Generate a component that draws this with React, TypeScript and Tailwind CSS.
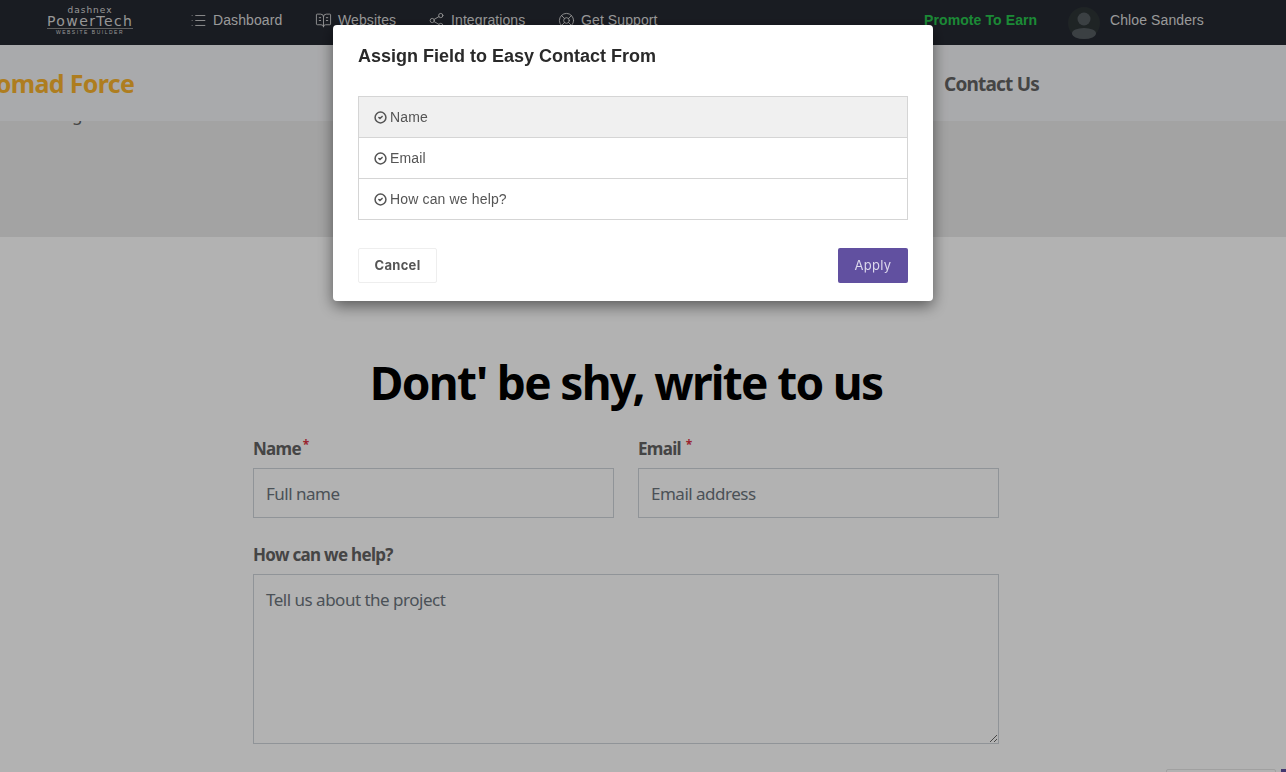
import { BookOpenText, CircleCheck, LifeBuoy, List, Share2 } from 'lucide-react';

const navItems = [
    { label: 'Dashboard', Icon: List, width: 'w-[125px]' },
    { label: 'Websites', Icon: BookOpenText, width: 'w-[113px]' },
    { label: 'Integrations', Icon: Share2, width: 'w-[130px]' },
    { label: 'Get Support', Icon: LifeBuoy, width: 'w-[120px]' },
];

const fields = ['Name', 'Email', 'How can we help?'];

function Logo() {
    return (
        <div className="ml-[47px] flex w-[86px] flex-col items-center text-[#d8d8d8] font-['DejaVu_Sans',sans-serif]">
            <span className="text-[9px] leading-[9px] tracking-[1px]">dashnex</span>
            <span className="w-full border-b border-[#8a8a8a] text-center text-[14px] leading-[13px] tracking-[1.4px]">PowerTech</span>
            <span className="text-[5px] leading-[7px] tracking-[1.5px] font-['Liberation_Sans',sans-serif]">WEBSITE BUILDER</span>
        </div>
    );
}

function TopBar() {
    return (
        <div className="flex h-[45px] items-center bg-[#252932] pb-[4px] font-['Liberation_Sans',sans-serif] text-[14px] text-[#dcdcdc]">
            <Logo />
            <nav className="ml-[57px] flex items-center">
                {navItems.map(({ label, Icon, width }) => (
                    <div key={label} className={`flex items-center gap-[6px] ${width}`}>
                        <Icon className="h-[17px] w-[17px]" strokeWidth={1.25} />
                        <span className="tracking-[0.1px]">{label}</span>
                    </div>
                ))}
            </nav>
            <span className="ml-[246px] w-[144px] font-bold text-[#28c64e] tracking-[0.1px]">Promote To Earn</span>
            <div className="flex items-center gap-[10px]">
                <svg width="32" height="32" viewBox="0 0 32 32" className="mt-[4px]">
                    <circle cx="16" cy="16" r="16" fill="#2d3436" />
                    <circle cx="16" cy="12" r="6.5" fill="#555c61" />
                    <ellipse cx="16" cy="26.5" rx="12" ry="5.5" fill="#555c61" />
                </svg>
                <span className="tracking-[0.1px]">Chloe Sanders</span>
            </div>
        </div>
    );
}

function SiteHeader() {
    return (
        <header className="relative z-10 flex h-[76px] items-center justify-between bg-[#f3f4f6] pt-px font-['Noto_Sans',sans-serif] text-[25px] font-bold">
            <span className="-ml-[24px] text-[#f9b42f] tracking-[-0.65px]">Nomad Force</span>
            <span className="mr-[247px] mt-px text-[19px] text-[#636363] tracking-[-0.8px]">Contact Us</span>
        </header>
    );
}

function ContactForm() {
    const inputClass =
        "h-[50px] w-full border border-[#ced4da] bg-white px-3 text-[17px] tracking-[-0.5px] placeholder:text-[#6c757d] placeholder:opacity-100";
    const labelClass = 'text-[17px] font-bold text-[#636363] tracking-[-0.7px]';

    return (
        <section className="ml-[253px] mt-[115px] flex w-[746px] flex-col font-['Noto_Sans',sans-serif]">
            <h1 className="text-center text-[46px] font-bold leading-[60px] tracking-[-1.7px] text-black">Dont' be shy, write to us</h1>
            <div className="mt-[25px] grid grid-cols-2 gap-x-6">
                <div className="flex flex-col">
                    <label className={`${labelClass} mb-[7px] leading-6`}>
                        Name <sup className="-ml-[2px] text-[12px] text-[#dc3545]">*</sup>
                    </label>
                    <input className={inputClass} placeholder="Full name" />
                </div>
                <div className="flex flex-col">
                    <label className={`${labelClass} mb-[7px] leading-6`}>
                        Email <sup className="ml-px text-[12px] text-[#dc3545]">*</sup>
                    </label>
                    <input className={inputClass} placeholder="Email address" />
                </div>
            </div>
            <label className={`${labelClass} mt-[25px] mb-[7px] leading-6`}>How can we help?</label>
            <textarea
                className="h-[170px] w-full border border-[#ced4da] bg-white px-3 py-[12px] text-[17px] tracking-[-0.5px] placeholder:text-[#6c757d] placeholder:opacity-100"
                placeholder="Tell us about the project"
            />
        </section>
    );
}

function AssignModal() {
    return (
        <div className="fixed inset-0 z-20 flex justify-center bg-black/30 pr-[20px] pt-[25px]">
            <div className="flex h-[276px] w-[600px] flex-col rounded-[4px] bg-white px-[25px] shadow-[0_5px_15px_rgba(0,0,0,0.5)] font-['Liberation_Sans',sans-serif]">
                <h2 className="mt-[20px] text-[18px] font-bold leading-[22px] text-[#2a2a2a]">Assign Field to Easy Contact From</h2>
                <ul className="mt-[29px] border border-[#d5d5d5] text-[14px] tracking-[0.15px] text-[#555555]">
                    {fields.map((field, index) => (
                        <li
                            key={field}
                            className={`flex items-center gap-[3px] pl-[15px] ${index === 0 ? 'h-[40px] bg-[#f0f0f0]' : 'h-[41px] border-t border-[#d5d5d5]'}`}
                        >
                            <CircleCheck className="h-[13px] w-[13px]" strokeWidth={2.8} />
                            <span>{field}</span>
                        </li>
                    ))}
                </ul>
                <div className="mt-[28px] flex justify-between font-['Inter',sans-serif] text-[13px] tracking-[0.3px]">
                    <button className="h-[35px] w-[79px] rounded-[2px] border border-[#eeeeee] font-bold text-[#555555]">Cancel</button>
                    <button className="h-[35px] w-[70px] rounded-[2px] bg-[#6150a0] text-[#dcd8ec]">Apply</button>
                </div>
            </div>
        </div>
    );
}

export default function App() {
    return (
        <div className="relative h-screen overflow-hidden bg-white">
            <TopBar />
            <SiteHeader />
            <div className="flow-root h-[116px] bg-[#eaeaea]">
                <span className="-mt-[15px] ml-[72px] block text-[17px] leading-[18px] text-[#636363] font-['Noto_Sans',sans-serif]">g</span>
            </div>
            <ContactForm />
            <div className="absolute left-[1166px] top-[769px] h-[60px] w-[110px] rounded-[2px] border border-[#e5e5e5]" />
            <div className="absolute left-[1281px] top-[769px] h-[60px] w-[10px] bg-[#6150a0]" />
            <AssignModal />
        </div>
    );
}
